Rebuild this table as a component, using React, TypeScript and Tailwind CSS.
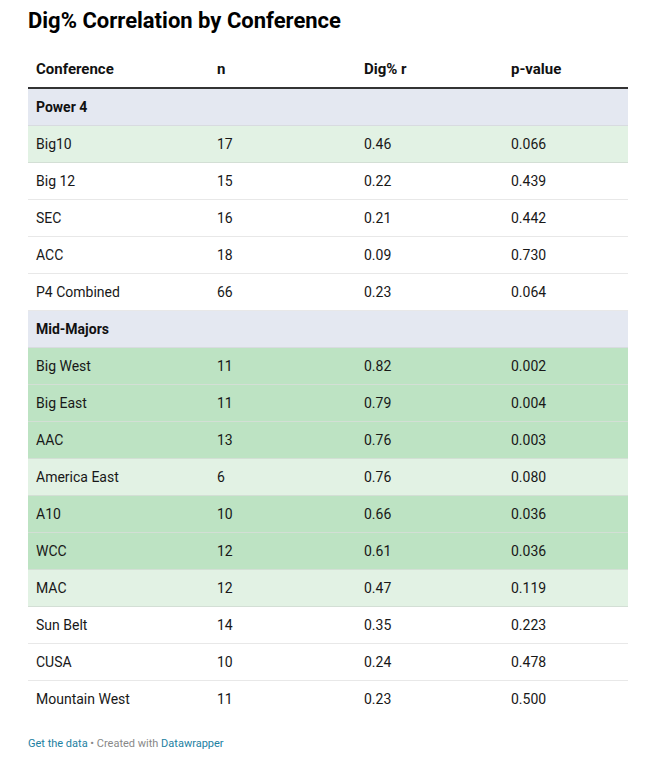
type Shade = "none" | "light" | "dark";

interface Row {
  name: string;
  n: number;
  r: string;
  p: string;
  shade: Shade;
}

interface Group {
  title: string;
  rows: Row[];
}

const groups: Group[] = [
  {
    title: "Power 4",
    rows: [
      { name: "Big10", n: 17, r: "0.46", p: "0.066", shade: "light" },
      { name: "Big 12", n: 15, r: "0.22", p: "0.439", shade: "none" },
      { name: "SEC", n: 16, r: "0.21", p: "0.442", shade: "none" },
      { name: "ACC", n: 18, r: "0.09", p: "0.730", shade: "none" },
      { name: "P4 Combined", n: 66, r: "0.23", p: "0.064", shade: "none" },
    ],
  },
  {
    title: "Mid-Majors",
    rows: [
      { name: "Big West", n: 11, r: "0.82", p: "0.002", shade: "dark" },
      { name: "Big East", n: 11, r: "0.79", p: "0.004", shade: "dark" },
      { name: "AAC", n: 13, r: "0.76", p: "0.003", shade: "dark" },
      { name: "America East", n: 6, r: "0.76", p: "0.080", shade: "light" },
      { name: "A10", n: 10, r: "0.66", p: "0.036", shade: "dark" },
      { name: "WCC", n: 12, r: "0.61", p: "0.036", shade: "dark" },
      { name: "MAC", n: 12, r: "0.47", p: "0.119", shade: "light" },
      { name: "Sun Belt", n: 14, r: "0.35", p: "0.223", shade: "none" },
      { name: "CUSA", n: 10, r: "0.24", p: "0.478", shade: "none" },
      { name: "Mountain West", n: 11, r: "0.23", p: "0.500", shade: "none" },
    ],
  },
];

const shadeClass: Record<Shade, string> = {
  none: "bg-white",
  light: "bg-[#e2f2e4]",
  dark: "bg-[#bde3c3]",
};

const cols = "grid grid-cols-[181px_147px_147px_125px]";

export default function App() {
  const lastGroup = groups.length - 1;
  return (
    <div className="min-h-[771px] bg-white px-[28px] pt-[7px] font-['Roboto','Liberation_Sans',sans-serif] text-[#181818]">
      <h1 className="text-[22px] font-bold leading-[27px] text-black">Dig% Correlation by Conference</h1>

      <div className="mt-[17px] w-[600px]">
        {/* header */}
        <div className={`${cols} border-b-2 border-[#333] pt-[8px] pb-[8px] text-[15px] font-bold leading-[20px] text-[#111]`}>
          <div className="pl-[8px]">Conference</div>
          <div className="pl-[8px]">n</div>
          <div className="pl-[8px]">Dig% r</div>
          <div className="pl-[8px]">p-value</div>
        </div>

        {groups.map((g, gi) => (
          <div key={g.title}>
            <div className="h-[37px] border-b border-[#d8dbe0] bg-[#e4e8f1] pl-[8px] text-[14px] font-bold leading-[36px] text-[#111]">
              {g.title}
            </div>
            {g.rows.map((row, ri) => {
              const isLast = gi === lastGroup && ri === g.rows.length - 1;
              const border = isLast
                ? ""
                : row.shade === "none"
                  ? "border-b border-[#e8e8e8]"
                  : "border-b border-[#d3dfd5]";
              return (
                <div
                  key={row.name}
                  className={`${cols} h-[37px] ${border} ${shadeClass[row.shade]} text-[14px] leading-[36px]`}
                >
                  <div className="pl-[8px]">{row.name}</div>
                  <div className="pl-[8px]">{row.n}</div>
                  <div className="pl-[8px]">{row.r}</div>
                  <div className="pl-[8px]">{row.p}</div>
                </div>
              );
            })}
          </div>
        ))}
      </div>

      <div className="mt-[19px] text-[11px] leading-[14px] text-[#888]">
        <span className="text-[#1d81a2]">Get the data</span>
        <span> • Created with </span>
        <span className="text-[#1d81a2]">Datawrapper</span>
      </div>
    </div>
  );
}
